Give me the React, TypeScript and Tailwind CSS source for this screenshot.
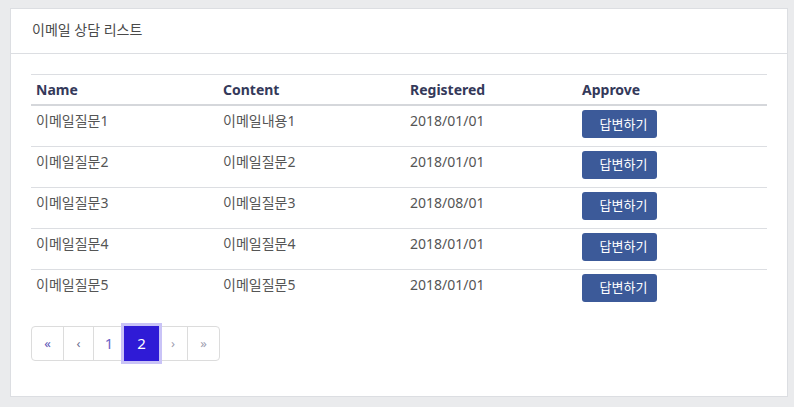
const rows = [
  { name: "이메일질문1", content: "이메일내용1", date: "2018/01/01" },
  { name: "이메일질문2", content: "이메일질문2", date: "2018/01/01" },
  { name: "이메일질문3", content: "이메일질문3", date: "2018/08/01" },
  { name: "이메일질문4", content: "이메일질문4", date: "2018/01/01" },
  { name: "이메일질문5", content: "이메일질문5", date: "2018/01/01" },
];

const Pagination = (): JSX.Element => {
  return (
    <ul className="flex h-[35px] w-fit text-[13px]">
      <li className="flex w-[33px] items-center justify-center rounded-l border border-[#dcdcdc] text-[#5b55b5]">
        «
      </li>
      <li className="-ml-px flex w-[31px] items-center justify-center border border-[#dcdcdc] text-[#6f6f8f]">
        ‹
      </li>
      <li className="-ml-px flex w-[32px] items-center justify-center border border-[#dcdcdc] text-[15px] text-[#6c64c6]">
        1
      </li>
      <li className="relative z-10 -ml-px flex w-[35px] items-center justify-center bg-[#2f1bd6] text-[15px] text-white ring-3 ring-[#c9c3f7]">
        2
      </li>
      <li className="-ml-px flex w-[30px] items-center justify-center border border-[#dcdcdc] text-[#a0a0b0]">
        ›
      </li>
      <li className="-ml-px flex w-[33px] items-center justify-center rounded-r border border-[#dcdcdc] text-[#a0a0b0]">
        »
      </li>
    </ul>
  );
};

export default function App() {
  return (
    <div
      className="h-[407px] w-[794px] bg-[#eaebed] pt-2 pl-[10px]"
      style={{ fontFamily: '"Noto Sans", "Noto Sans CJK KR", sans-serif' }}
    >
      <div className="w-[778px] h-[389px] border border-[#dcdee2] bg-white">
        <div className="border-b border-[#dcdee2] px-[21px] pt-[10px] pb-[13px] text-sm leading-[21px] text-[#4a4a4a]">
          이메일 상담 리스트
        </div>
        <div className="px-5 pt-5">
          <table className="w-[736px] border-collapse text-left text-sm text-[#555]">
            <thead>
              <tr className="border-t border-[#dcdee2] border-b-2 border-b-[#d5d7db]">
                <th className="w-[187px] px-[5px] py-1 leading-[21px] font-bold text-[#34395a]">Name</th>
                <th className="w-[187px] px-[5px] py-1 leading-[21px] font-bold text-[#34395a]">Content</th>
                <th className="w-[172px] px-[5px] py-1 leading-[21px] font-bold text-[#34395a]">Registered</th>
                <th className="px-[5px] py-1 leading-[21px] font-bold text-[#34395a]">Approve</th>
              </tr>
            </thead>
            <tbody>
              {rows.map((row, i) => (
                <tr key={i} className={i > 0 ? "border-t border-[#dcdee2]" : ""}>
                  <td className="h-[41px] px-[5px] pt-1 align-top leading-[21px]">{row.name}</td>
                  <td className="h-[41px] px-[5px] pt-1 align-top leading-[21px]">{row.content}</td>
                  <td className="h-[41px] px-[5px] pt-1 align-top leading-[21px]">{row.date}</td>
                  <td className="h-[41px] px-[5px] pt-1 align-top">
                    <button className="h-7 w-[75px] rounded-[3px] bg-[#3c5a99] pl-[8px] text-[13px] text-white">
                      답변하기
                    </button>
                  </td>
                </tr>
              ))}
            </tbody>
          </table>
          <div className="mt-4">
            <Pagination />
          </div>
        </div>
      </div>
    </div>
  );
}
